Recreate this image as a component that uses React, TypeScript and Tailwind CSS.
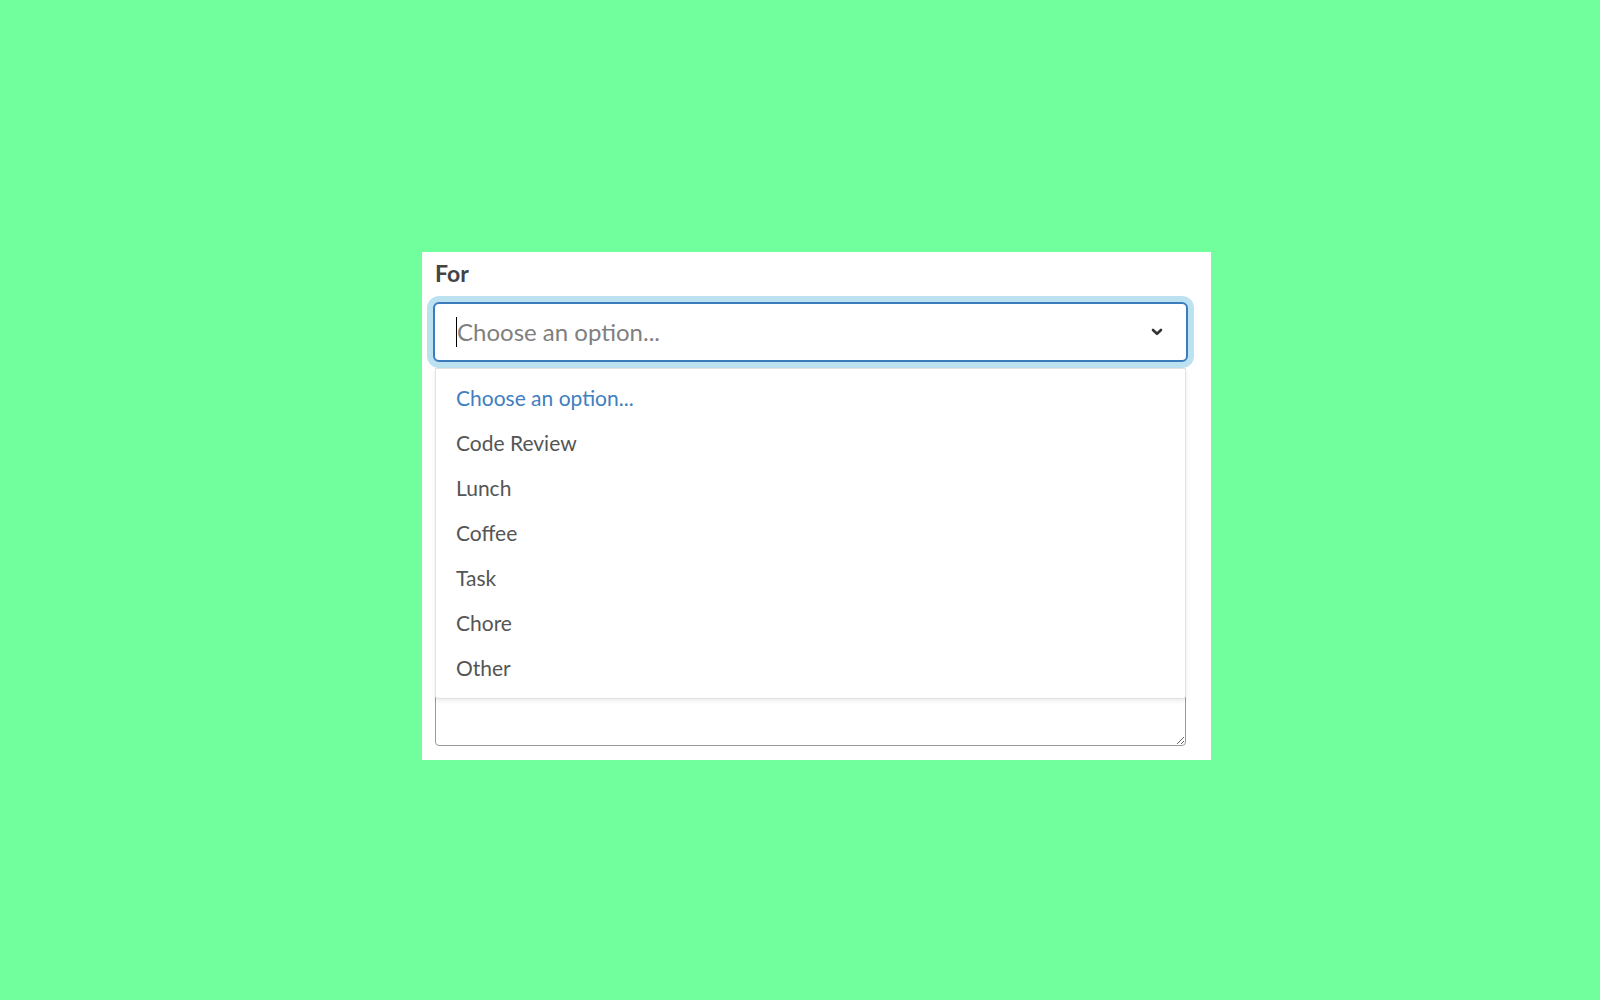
const options = ["Code Review", "Lunch", "Coffee", "Task", "Chore", "Other"];

export default function App() {
  return (
    <div className="flex h-[1000px] w-[1600px] bg-[#70ff9c] font-['Lato','Noto_Sans',sans-serif]">
      <div className="ml-[422px] mt-[252px] h-[508px] w-[789px] bg-white pl-[13px] pr-[25px] pt-[7px]">
        <label className="block text-[23px] font-bold leading-[29px] text-[#444]">For</label>
        <div className="relative mt-[14px]">
          <div className="-mx-[2px] flex h-[60px] items-center rounded-[6px] border-2 border-[#3b7cbd] bg-white pl-[21px] pr-[23px] shadow-[0_0_0_6px_#bce1f1]">
            <span className="h-[30px] w-px bg-black" />
            <span className="flex-1 text-[24px] text-[#808080]">Choose an option...</span>
            <svg width="12" height="8" viewBox="0 0 12 8" className="text-[#333]">
              <path d="M2 2 L6 5.8 L10 2" fill="none" stroke="currentColor" strokeWidth="2.6" strokeLinecap="round" strokeLinejoin="round" />
            </svg>
          </div>
          <ul className="absolute left-0 right-0 top-[66px] z-10 rounded-b-[3px] border border-[#e2e2e2] bg-white pb-[8px] pt-[6px] shadow-[0_2px_4px_rgba(0,0,0,0.08)]">
            <li className="flex h-[45px] items-center pl-[20px] text-[21px] text-[#4080c0]">Choose an option...</li>
            {options.map((o) => (
              <li key={o} className="flex h-[45px] items-center pl-[20px] text-[21px] text-[#555]">
                {o}
              </li>
            ))}
          </ul>
          <textarea className="mt-[16px] block h-[368px] w-full rounded-[4px] border border-[#999] bg-white outline-none" />
        </div>
      </div>
    </div>
  );
}
